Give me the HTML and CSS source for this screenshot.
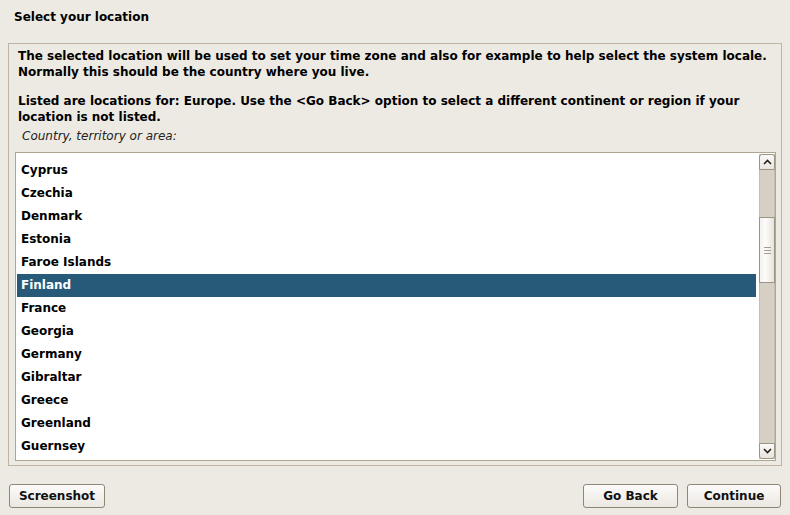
FILE: index.html
```html
<!DOCTYPE html>
<html>
<head>
<meta charset="utf-8">
<link rel="stylesheet" href="styles.css">
</head>
<body>
<div class="app">
  <div class="title">Select your location</div>
  <div class="frame">
    <p class="desc">The selected location will be used to set your time zone and also for example to help select the system locale. Normally this should be the country where you live.</p>
    <p class="desc second">Listed are locations for: Europe. Use the &lt;Go Back&gt; option to select a different continent or region if your location is not listed.</p>
    <div class="label">Country, territory or area:</div>
    <div class="listbox">
      <ul class="list">
        <li>Cyprus</li>
        <li>Czechia</li>
        <li>Denmark</li>
        <li>Estonia</li>
        <li>Faroe Islands</li>
        <li class="sel">Finland</li>
        <li>France</li>
        <li>Georgia</li>
        <li>Germany</li>
        <li>Gibraltar</li>
        <li>Greece</li>
        <li>Greenland</li>
        <li>Guernsey</li>
      </ul>
      <div class="scrollbar">
        <div class="sbtn up"><svg width="9" height="6" viewBox="0 0 9 6"><path d="M1 5 L4.5 1.5 L8 5" fill="none" stroke="#222" stroke-width="1.6"/></svg></div>
        <div class="trough">
          <div class="gap1"></div>
          <div class="thumb"><span></span><span></span><span></span></div>
        </div>
        <div class="sbtn down"><svg width="9" height="6" viewBox="0 0 9 6"><path d="M1 1 L4.5 4.5 L8 1" fill="none" stroke="#222" stroke-width="1.6"/></svg></div>
      </div>
    </div>
  </div>
  <div class="buttons">
    <button class="btn shot">Screenshot</button>
    <div class="spacer"></div>
    <button class="btn back">Go Back</button>
    <button class="btn cont">Continue</button>
  </div>
</div>
</body>
</html>
```
FILE: styles.css
```css
html, body {
  margin: 0;
  padding: 0;
  background: #edeae4;
}
body {
  font-family: "DejaVu Sans", sans-serif;
  font-size: 12px;
  color: #000;
  width: 790px;
  height: 515px;
  overflow: hidden;
}
.app {
  display: flex;
  flex-direction: column;
  height: 515px;
}
.title {
  font-weight: bold;
  padding: 9px 0 0 14px;
  height: 43px;
  box-sizing: border-box;
  line-height: 17px;
}
.frame {
  margin: 0 8px;
  border: 1px solid #bfb4a2;
  height: 423px;
  box-sizing: border-box;
  padding: 4px 5px 4px 6px;
  display: flex;
  flex-direction: column;
}
.desc {
  margin: 0;
  font-weight: bold;
  line-height: 16px;
  padding-left: 3px;
}
.desc.second {
  margin-top: 13px;
}
.label {
  font-style: italic;
  font-size: 12px;
  line-height: 16px;
  padding: 3px 0 0 7px;
  color: #222;
}
.listbox {
  margin-top: 8px;
  flex: 1;
  border: 1px solid #b0a590;
  background: #fff;
  display: flex;
  min-height: 0;
}
.list {
  list-style: none;
  margin: 0;
  padding: 6px 0 0 1px;
  flex: 1;
  overflow: hidden;
}
.list li {
  font-weight: bold;
  height: 23px;
  line-height: 23px;
  padding-left: 4px;
}
.list li.sel {
  background: #265a78;
  color: #fff;
}
.scrollbar {
  width: 16px;
  box-sizing: border-box;
  margin: 1px 0 1px 3px;
  display: flex;
  flex-direction: column;
  background: #d6d0c4;
  border-left: 1px solid #c6beb0;
  border-right: 1px solid #c6beb0;
}
.sbtn {
  height: 16px;
  margin: 0 -1px;
  box-sizing: border-box;
  background: linear-gradient(#fbfaf8, #e8e4dd);
  border: 1px solid #9d9584;
  display: flex;
  align-items: center;
  justify-content: center;
}
.sbtn.up { border-radius: 3px 3px 0 0; }
.sbtn.down { border-radius: 0 0 3px 3px; }
.trough {
  flex: 1;
  display: flex;
  flex-direction: column;
}
.gap1 { height: 47px; }
.thumb {
  height: 66px;
  margin: 0 -1px;
  box-sizing: border-box;
  border: 1px solid #9d9584;
  background: linear-gradient(90deg, #f4f2ee, #fdfcfb 40%, #e6e2da);
  display: flex;
  flex-direction: column;
  align-items: center;
  justify-content: center;
  gap: 2px;
}
.thumb span {
  display: block;
  width: 7px;
  height: 1px;
  background: #a49c8c;
}
.buttons {
  display: flex;
  padding: 18px 9px 0 9px;
  gap: 9px;
}
.spacer { flex: 1; }
.btn {
  font-family: "DejaVu Sans", sans-serif;
  font-weight: bold;
  font-size: 12px;
  height: 24px;
  border: 1px solid #8e8676;
  border-radius: 3px;
  background: linear-gradient(#fcfbfa, #ebe7e1);
  color: #111;
  padding: 0;
}
.shot { width: 96px; }
.back { width: 95px; }
.cont { width: 94px; }
```
